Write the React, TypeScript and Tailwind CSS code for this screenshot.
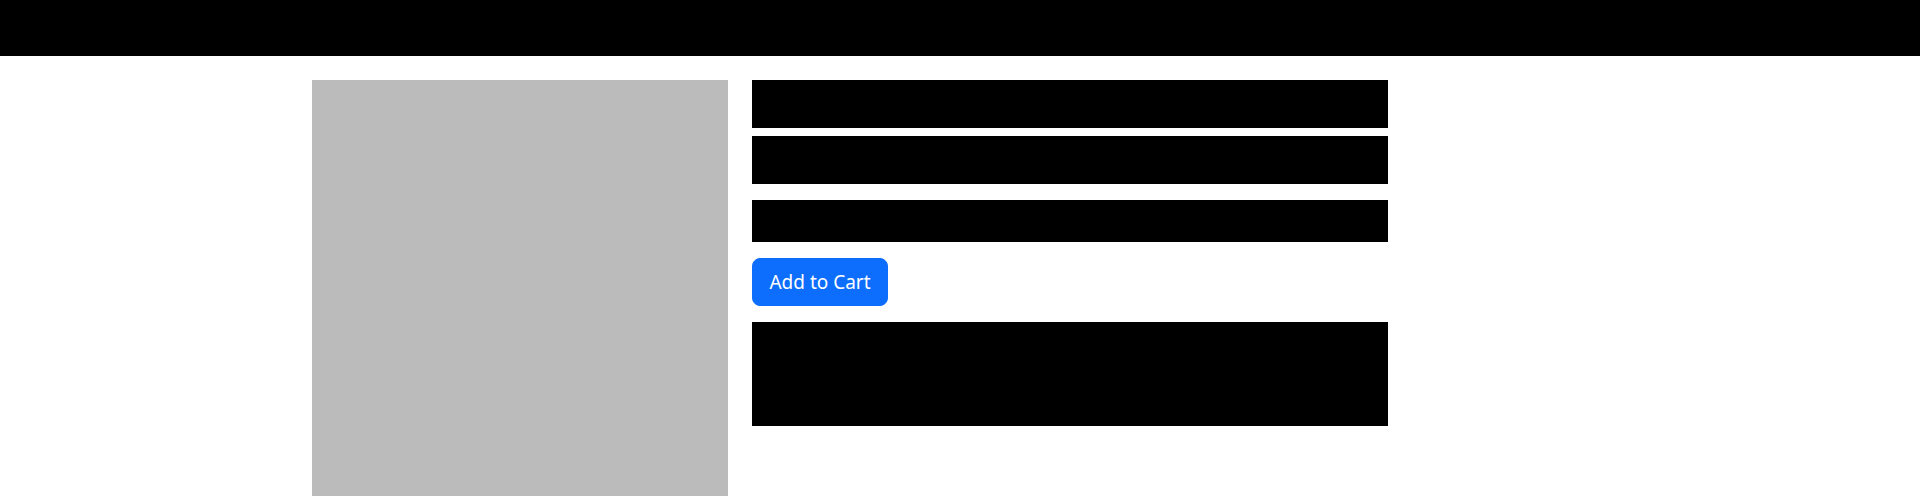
export default function App() {
  return (
    <div className="min-h-[496px] bg-white" style={{ fontFamily: '"Noto Sans", "Open Sans", sans-serif' }}>
      <header className="h-14 bg-black" />
      <main className="mx-auto w-[1320px] px-3 pt-6">
        <div className="flex gap-6">
          <div className="w-[416px] h-[440px] shrink-0 bg-[#bbbbbb]" />
          <div className="w-[636px] flex flex-col">
            <div className="h-12 bg-black" />
            <div className="h-12 bg-black mt-2" />
            <div className="h-[42px] bg-black mt-4" />
            <div className="mt-4">
              <button className="h-12 w-[136px] rounded-lg border border-[#0d6efd] bg-[#0d6efd] text-white text-[19px] leading-[30px]">
                Add to Cart
              </button>
            </div>
            <div className="h-[104px] bg-black mt-4" />
          </div>
        </div>
      </main>
    </div>
  );
}
